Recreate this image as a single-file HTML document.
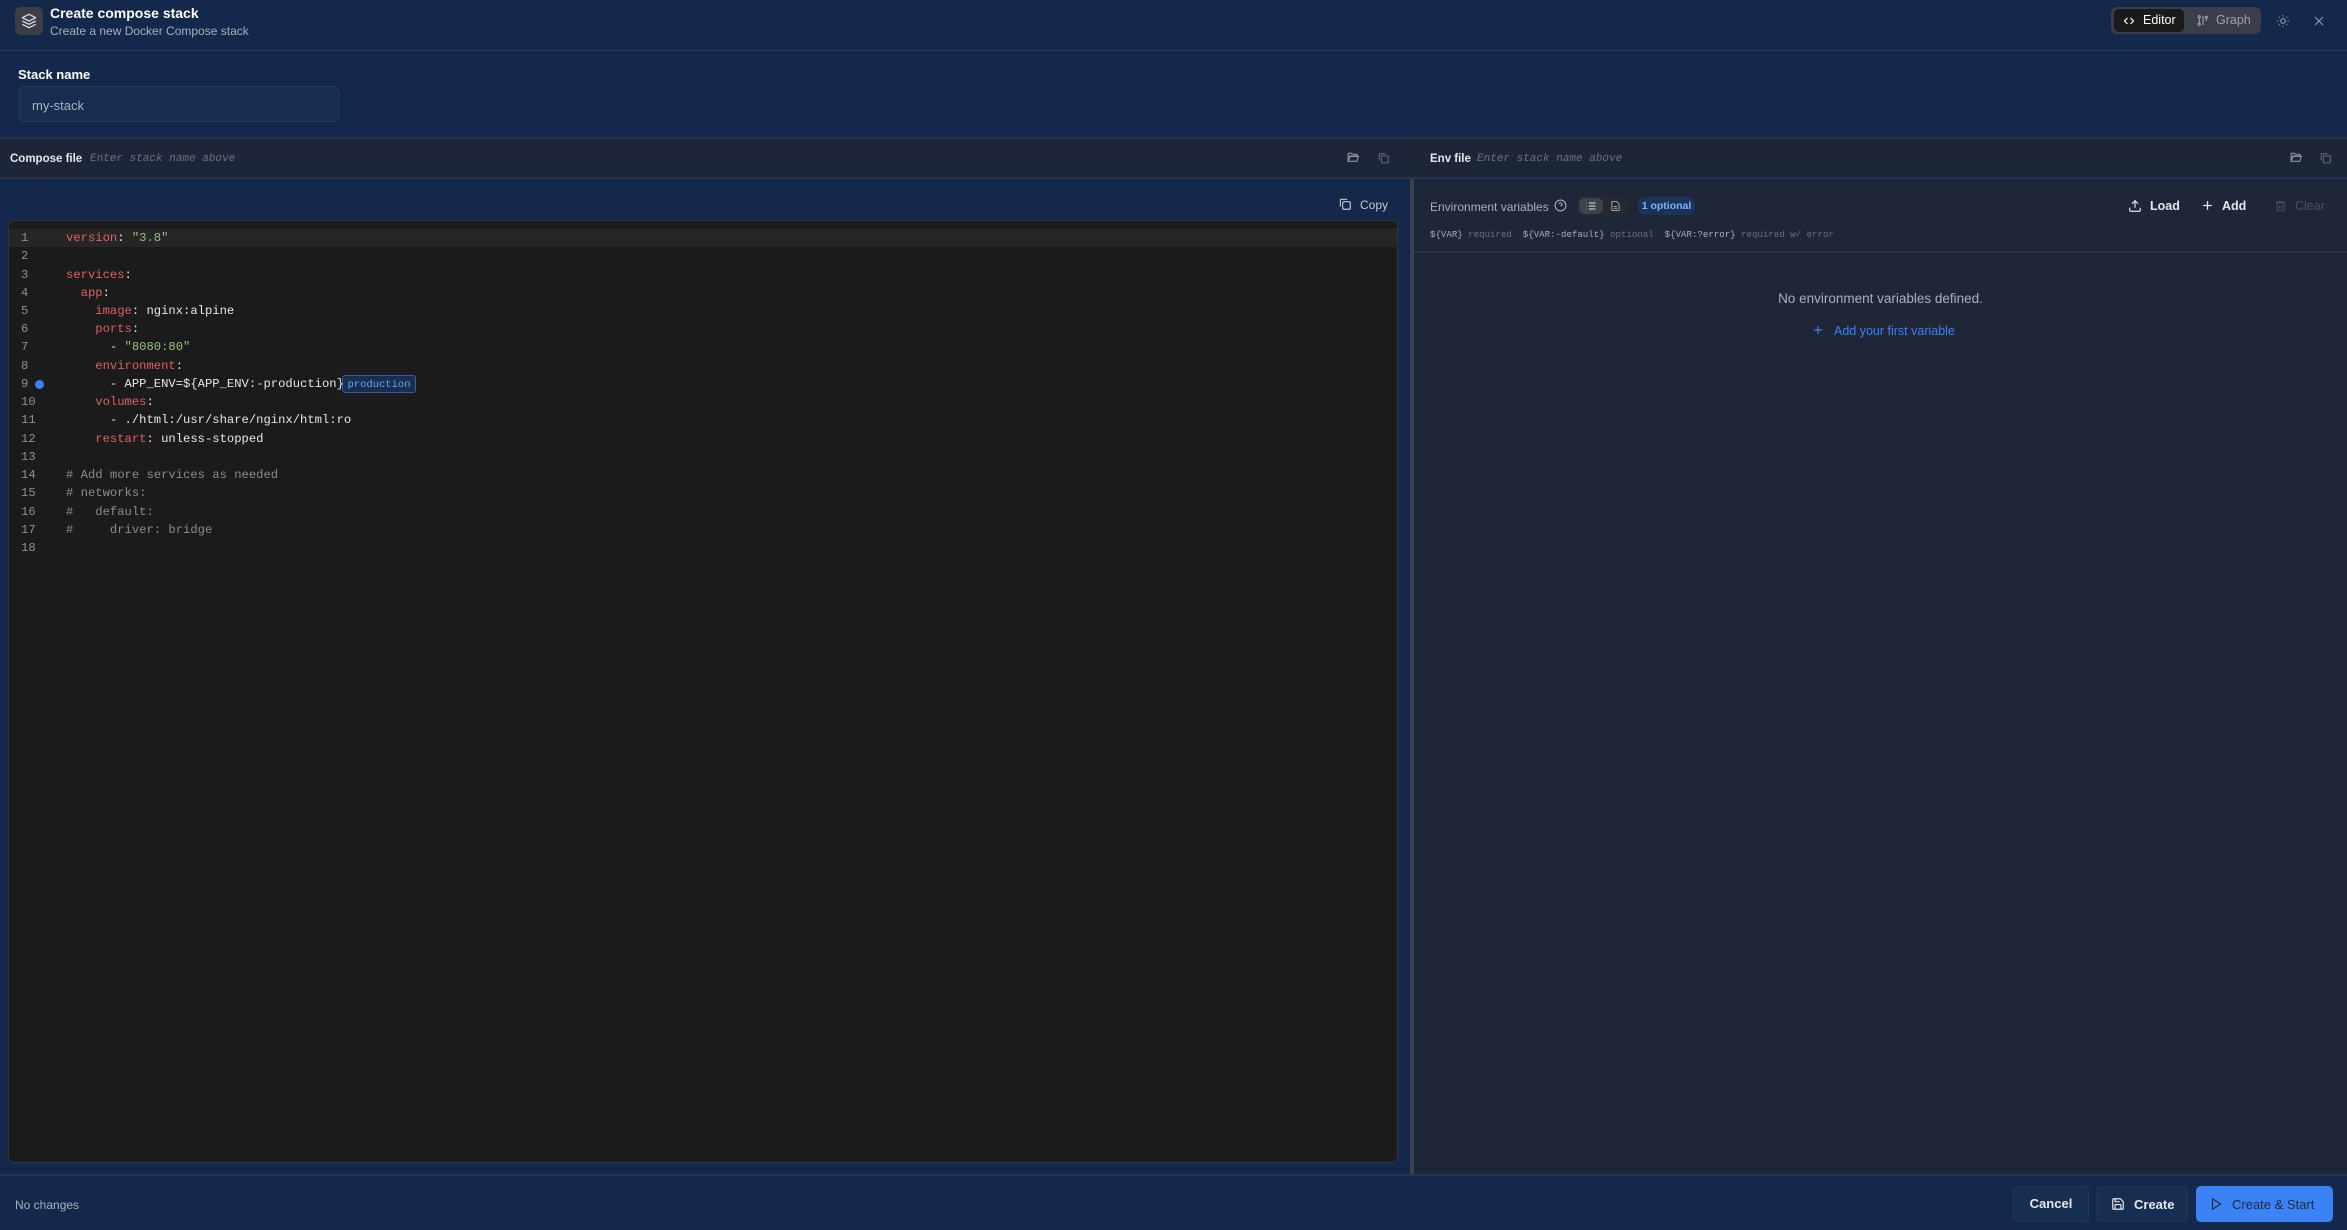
<!DOCTYPE html>
<html><head><meta charset="utf-8"><style>
*{box-sizing:border-box;margin:0;padding:0}
body{width:2347px;height:1230px;overflow:hidden;background:#13284a;font-family:"Liberation Sans",sans-serif;color:#e5e7eb;position:relative}
.a{position:absolute}
.mono{font-family:"Liberation Mono",monospace}
svg{display:block}
.code div{position:absolute;left:0;height:18px;line-height:18px;font-size:12.2px;white-space:pre}
.ln{color:#8b8f96;width:40px;text-align:left;padding-left:12px}
.k{color:#e0606a}.s{color:#98c379}.v{color:#e6e6e6}.c{color:#8a8d93}
</style></head><body>
<!-- header -->
<div class="a" style="left:0;top:0;width:2347px;height:51px;background:#13284a;border-bottom:1px solid #2c3a52"></div>
<div class="a" style="left:15px;top:7px;width:28px;height:28px;background:#3b3e46;border-radius:6px"></div>
<svg class="a" style="left:21px;top:13px" width="16" height="16" viewBox="0 0 24 24" fill="none" stroke="#d8dce2" stroke-width="2" stroke-linejoin="round"><path d="M12 2 2 7l10 5 10-5-10-5z"/><path d="m2 12 10 5 10-5"/><path d="m2 17 10 5 10-5"/></svg>
<div class="a" style="left:50px;top:5px;font-size:14px;font-weight:bold;color:#fff">Create compose stack</div>
<div class="a" style="left:50px;top:24px;font-size:12px;color:#a8b0bd">Create a new Docker Compose stack</div>
<div class="a" style="left:2111px;top:7px;width:150px;height:27px;background:#3a3e48;border-radius:6px"></div>
<div class="a" style="left:2114px;top:9px;width:70px;height:23px;background:#1a1a1a;border-radius:5px"></div>
<svg class="a" style="left:2123px;top:15px" width="12" height="12" viewBox="0 0 24 24" fill="none" stroke="#fff" stroke-width="2.4"><path d="m9 6-6 6 6 6M15 6l6 6-6 6"/></svg>
<div class="a" style="left:2143px;top:13px;font-size:12.5px;color:#fff">Editor</div>
<svg class="a" style="left:2196px;top:14px" width="13" height="13" viewBox="0 0 24 24" fill="none" stroke="#a0a4ad" stroke-width="2"><circle cx="6" cy="5" r="2"/><circle cx="6" cy="19" r="2"/><path d="M6 7v10M13 4v16"/><circle cx="19" cy="6" r="2"/><path d="M19 8v5"/></svg>
<div class="a" style="left:2216px;top:13px;font-size:12.5px;color:#a0a4ad">Graph</div>
<svg class="a" style="left:2276px;top:14px" width="14" height="14" viewBox="0 0 24 24" fill="none" stroke="#8e97a6" stroke-width="2"><circle cx="12" cy="12" r="4"/><path d="M12 2v2M12 20v2M4.9 4.9l1.4 1.4M17.7 17.7l1.4 1.4M2 12h2M20 12h2M4.9 19.1l1.4-1.4M17.7 6.3l1.4-1.4"/></svg>
<svg class="a" style="left:2313px;top:15px" width="12" height="12" viewBox="0 0 24 24" fill="none" stroke="#8e97a6" stroke-width="2.4"><path d="M4 4l16 16M20 4 4 20"/></svg>
<!-- stack name -->
<div class="a" style="left:18px;top:67px;font-size:13px;font-weight:bold;color:#fff">Stack name</div>
<div class="a" style="left:19px;top:86px;width:320px;height:36px;background:#152d50;border:1px solid #203a60;border-radius:5px"></div>
<div class="a" style="left:32px;top:98px;font-size:13px;color:#aab3c0">my-stack</div>
<div class="a" style="left:0;top:137px;width:2347px;height:2px;background:#27344a"></div>
<!-- compose bar -->
<div class="a" style="left:0;top:139px;width:1410px;height:40px;background:#1c2638;border-bottom:2px solid #2b3546"></div>
<div class="a" style="left:10px;top:153px;font-size:11.5px;font-weight:bold;color:#e5e7eb">Compose file</div>
<div class="a mono" style="left:90px;top:153px;font-size:11px;font-style:italic;color:#6b7280">Enter stack name above</div>
<svg class="a" style="left:1346px;top:151px" width="14" height="13" viewBox="0 0 24 24" fill="none" stroke="#8e97a6" stroke-width="2"><path d="M3 6a2 2 0 0 1 2-2h4l2 2h7a2 2 0 0 1 2 2v1H7l-4 10z"/><path d="M3 19 6 10h16l-3 9z"/></svg>
<svg class="a" style="left:1377px;top:151px" width="13" height="14" viewBox="0 0 24 24" fill="none" stroke="#5f6878" stroke-width="2"><rect x="8" y="8" width="13" height="13" rx="2"/><path d="M4 16V5a1 1 0 0 1 1-1h11"/></svg>
<!-- copy -->
<svg class="a" style="left:1338px;top:197px" width="14" height="14" viewBox="0 0 24 24" fill="none" stroke="#c2c7cf" stroke-width="2"><rect x="8" y="8" width="13" height="13" rx="2"/><path d="M4 16V5a1 1 0 0 1 1-1h11"/></svg>
<div class="a" style="left:1360px;top:198px;font-size:12px;color:#c2c7cf">Copy</div>
<!-- editor -->
<div class="a" style="left:8px;top:220px;width:1390px;height:943px;background:#1b1b1b;border:1px solid #30343b;border-radius:6px"></div>
<div class="a" style="left:9px;top:229px;width:1388px;height:18px;background:#262626"></div>
<div class="a" style="left:35px;top:380px;width:9px;height:9px;border-radius:50%;background:#3b82f6"></div>
<div class="a" style="left:342px;top:375px;width:74px;height:18px;border:1px solid #2f5fa8;background:#1a2d4a;border-radius:3px;color:#60a5fa;font-size:10.5px;line-height:16px;text-align:center"><span class="mono">production</span></div>
<div class="a code mono" style="left:9px;top:229px;width:1380px">
<div class="ln" style="top:0">1</div><div style="top:0;left:57px"><span class="k">version</span><span class="v">: </span><span class="s">"3.8"</span></div>
<div class="ln" style="top:18.2px">2</div>
<div class="ln" style="top:36.5px">3</div><div style="top:36.5px;left:57px"><span class="k">services</span><span class="v">:</span></div>
<div class="ln" style="top:54.7px">4</div><div style="top:54.7px;left:57px"><span class="k">  app</span><span class="v">:</span></div>
<div class="ln" style="top:73px">5</div><div style="top:73px;left:57px"><span class="k">    image</span><span class="v">: nginx:alpine</span></div>
<div class="ln" style="top:91.2px">6</div><div style="top:91.2px;left:57px"><span class="k">    ports</span><span class="v">:</span></div>
<div class="ln" style="top:109.4px">7</div><div style="top:109.4px;left:57px"><span class="v">      - </span><span class="s">"8080:80"</span></div>
<div class="ln" style="top:127.7px">8</div><div style="top:127.7px;left:57px"><span class="k">    environment</span><span class="v">:</span></div>
<div class="ln" style="top:146px">9</div><div style="top:146px;left:57px"><span class="v">      - APP_ENV=${APP_ENV:-production}</span></div>
<div class="ln" style="top:164.2px">10</div><div style="top:164.2px;left:57px"><span class="k">    volumes</span><span class="v">:</span></div>
<div class="ln" style="top:182.4px">11</div><div style="top:182.4px;left:57px"><span class="v">      - ./html:/usr/share/nginx/html:ro</span></div>
<div class="ln" style="top:200.6px">12</div><div style="top:200.6px;left:57px"><span class="k">    restart</span><span class="v">: unless-stopped</span></div>
<div class="ln" style="top:218.9px">13</div>
<div class="ln" style="top:237.1px">14</div><div style="top:237.1px;left:57px" class="c"># Add more services as needed</div>
<div class="ln" style="top:255.4px">15</div><div style="top:255.4px;left:57px" class="c"># networks:</div>
<div class="ln" style="top:273.6px">16</div><div style="top:273.6px;left:57px" class="c">#   default:</div>
<div class="ln" style="top:291.8px">17</div><div style="top:291.8px;left:57px" class="c">#     driver: bridge</div>
<div class="ln" style="top:310px">18</div>
</div>
<!-- divider + right pane -->
<div class="a" style="left:1410px;top:179px;width:4px;height:996px;background:#3a4150"></div>
<div class="a" style="left:1410px;top:139px;width:937px;height:40px;background:#1d2637;border-bottom:2px solid #2b3546"></div>
<div class="a" style="left:1414px;top:181px;width:933px;height:994px;background:#1e2637"></div>
<div class="a" style="left:1430px;top:153px;font-size:11.5px;font-weight:bold;color:#e5e7eb">Env file</div>
<div class="a mono" style="left:1477px;top:153px;font-size:11px;font-style:italic;color:#6b7280">Enter stack name above</div>
<svg class="a" style="left:2289px;top:151px" width="14" height="13" viewBox="0 0 24 24" fill="none" stroke="#8e97a6" stroke-width="2"><path d="M3 6a2 2 0 0 1 2-2h4l2 2h7a2 2 0 0 1 2 2v1H7l-4 10z"/><path d="M3 19 6 10h16l-3 9z"/></svg>
<svg class="a" style="left:2319px;top:151px" width="13" height="14" viewBox="0 0 24 24" fill="none" stroke="#5f6878" stroke-width="2"><rect x="8" y="8" width="13" height="13" rx="2"/><path d="M4 16V5a1 1 0 0 1 1-1h11"/></svg>
<div class="a" style="left:1430px;top:200px;font-size:12px;color:#a8b0bd">Environment variables</div>
<svg class="a" style="left:1554px;top:199px" width="13" height="13" viewBox="0 0 24 24" fill="none" stroke="#a8b0bd" stroke-width="2"><circle cx="12" cy="12" r="10"/><path d="M9.1 9a3 3 0 0 1 5.8 1c0 2-3 3-3 3M12 17h.01"/></svg>
<div class="a" style="left:1577px;top:196px;width:52px;height:20px;background:#262a30;border-radius:7px"></div>
<div class="a" style="left:1579px;top:198px;width:24px;height:16px;background:#3e424a;border-radius:6px"></div>
<svg class="a" style="left:1585px;top:200px" width="12" height="12" viewBox="0 0 24 24" fill="none" stroke="#e5e7eb" stroke-width="2"><path d="M8 6h13M8 12h13M8 18h13M3 6h1M3 12h1M3 18h1"/></svg>
<svg class="a" style="left:1610px;top:200px" width="11" height="12" viewBox="0 0 24 24" fill="none" stroke="#a8b0bd" stroke-width="2"><path d="M14 2H6a2 2 0 0 0-2 2v16a2 2 0 0 0 2 2h12a2 2 0 0 0 2-2V8z"/><path d="M8 13h8M8 17h8"/></svg>
<div class="a" style="left:1638px;top:197px;width:57px;height:18px;background:#1a3358;border-radius:6px;font-size:10.5px;font-weight:bold;color:#7fb1f5;text-align:center;line-height:18px">1 optional</div>
<svg class="a" style="left:2128px;top:199px" width="14" height="14" viewBox="0 0 24 24" fill="none" stroke="#e5e7eb" stroke-width="2"><path d="M21 15v4a2 2 0 0 1-2 2H5a2 2 0 0 1-2-2v-4M17 8l-5-5-5 5M12 3v12"/></svg>
<div class="a" style="left:2150px;top:199px;font-size:12.5px;font-weight:bold;color:#e5e7eb">Load</div>
<svg class="a" style="left:2201px;top:199px" width="13" height="13" viewBox="0 0 24 24" fill="none" stroke="#e5e7eb" stroke-width="2.4"><path d="M12 4v16M4 12h16"/></svg>
<div class="a" style="left:2222px;top:199px;font-size:12.5px;font-weight:bold;color:#e5e7eb">Add</div>
<svg class="a" style="left:2274px;top:199px" width="13" height="14" viewBox="0 0 24 24" fill="none" stroke="#4a5262" stroke-width="2"><path d="M3 6h18M8 6V4h8v2M5 6l1 15h12l1-15M10 11v6M14 11v6"/></svg>
<div class="a" style="left:2295px;top:199px;font-size:12.5px;color:#4a5262">Clear</div>
<div class="a mono" style="left:1430px;top:229px;font-size:9.1px;color:#6b7280;white-space:pre"><span style="color:#a8b0bd">${VAR}</span> required  <span style="color:#a8b0bd">${VAR:-default}</span> optional  <span style="color:#a8b0bd">${VAR:?error}</span> required w/ error</div>
<div class="a" style="left:1414px;top:251px;width:933px;height:2px;background:#2b3546"></div>
<div class="a" style="left:1414px;top:291px;width:933px;text-align:center;font-size:13.5px;color:#aab1bd">No environment variables defined.</div>
<svg class="a" style="left:1812px;top:324px" width="12" height="12" viewBox="0 0 24 24" fill="none" stroke="#3b82f6" stroke-width="2.4"><path d="M12 4v16M4 12h16"/></svg>
<div class="a" style="left:1834px;top:324px;font-size:12.5px;color:#3b82f6">Add your first variable</div>
<!-- footer -->
<div class="a" style="left:0;top:1174px;width:2347px;height:2px;background:#27344a"></div>
<div class="a" style="left:15px;top:1198px;font-size:12px;color:#a8b0bd">No changes</div>
<div class="a" style="left:2013px;top:1186px;width:76px;height:36px;background:#162e52;border:1px solid #203a60;border-radius:5px;font-size:13px;font-weight:bold;color:#e5e7eb;text-align:center;line-height:34px">Cancel</div>
<div class="a" style="left:2097px;top:1186px;width:91px;height:36px;background:#162e52;border:1px solid #203a60;border-radius:5px"></div>
<svg class="a" style="left:2111px;top:1197px" width="14" height="14" viewBox="0 0 24 24" fill="none" stroke="#e5e7eb" stroke-width="2"><path d="M19 21H5a2 2 0 0 1-2-2V5a2 2 0 0 1 2-2h11l5 5v11a2 2 0 0 1-2 2z"/><path d="M17 21v-8H7v8M7 3v5h8"/></svg>
<div class="a" style="left:2134px;top:1197px;font-size:13px;font-weight:bold;color:#e5e7eb">Create</div>
<div class="a" style="left:2196px;top:1186px;width:137px;height:36px;background:#3b82f6;border-radius:5px"></div>
<svg class="a" style="left:2209px;top:1197px" width="14" height="14" viewBox="0 0 24 24" fill="none" stroke="#1e293b" stroke-width="2"><path d="M6 3l14 9-14 9z"/></svg>
<div class="a" style="left:2232px;top:1197px;font-size:13px;color:#1e293b">Create &amp; Start</div>
</body></html>
